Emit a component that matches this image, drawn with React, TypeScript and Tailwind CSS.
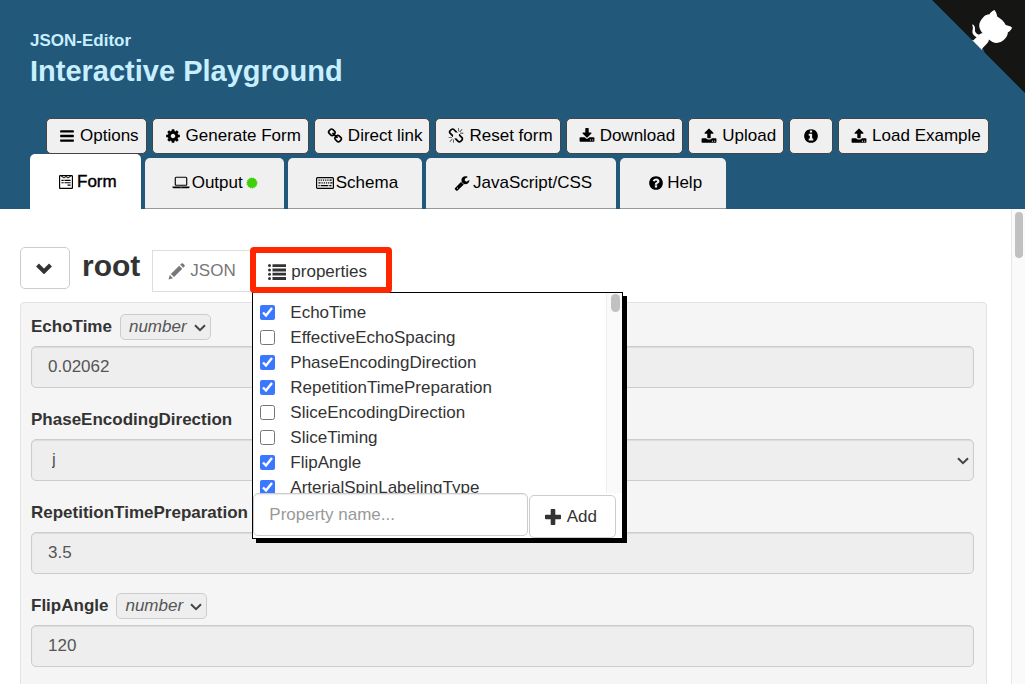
import React, { useState } from 'react';
import { FaWpforms } from 'react-icons/fa';

const ICONS = {
  bars: 'M1664 1344v128q0 26-19 45t-45 19h-1408q-26 0-45-19t-19-45v-128q0-26 19-45t45-19h1408q26 0 45 19t19 45zm0-512v128q0 26-19 45t-45 19h-1408q-26 0-45-19t-19-45v-128q0-26 19-45t45-19h1408q26 0 45 19t19 45zm0-512v128q0 26-19 45t-45 19h-1408q-26 0-45-19t-19-45v-128q0-26 19-45t45-19h1408q26 0 45 19t19 45z',
  cog: 'M1152 896q0-106-75-181t-181-75-181 75-75 181 75 181 181 75 181-75 75-181zm512-109v222q0 12-8 23t-20 13l-185 28q-19 54-39 91 35 50 107 138 10 12 10 25t-9 23q-27 37-99 108t-94 71q-12 0-26-9l-138-108q-44 23-91 38-16 136-29 186-7 28-36 28h-222q-14 0-24.5-8.5t-11.5-21.5l-28-184q-49-16-90-37l-141 107q-10 9-25 9-14 0-25-11-126-114-165-168-7-10-7-23 0-12 8-23 15-21 51-66.5t54-70.5q-27-50-41-99l-183-27q-13-2-21-12.5t-8-23.5v-222q0-12 8-23t19-13l186-28q14-46 39-92-40-57-107-138-10-12-10-24 0-10 9-23 26-36 98.5-107.5t94.5-71.5q13 0 26 10l138 107q44-23 91-38 16-136 29-186 7-28 36-28h222q14 0 24.5 8.5t11.5 21.5l28 184q49 16 90 37l142-107q9-9 24-9 13 0 25 10 129 119 165 170 7 8 7 22 0 12-8 23-15 21-51 66.5t-54 70.5q26 50 41 98l183 28q13 2 21 12.5t8 23.5z',
  link: 'M1520 1216q0-40-28-68l-208-208q-28-28-68-28-42 0-72 32 3 3 19 18.5t21.5 21.5 15 19 13 25.5 3.5 27.5q0 40-28 68t-68 28q-15 0-27.5-3.5t-25.5-13-19-15-21.5-21.5-18.5-19q-33 31-33 73 0 40 28 68l206 207q27 27 68 27 40 0 68-26l147-146q28-28 28-67zm-703-705q0-40-28-68l-206-207q-28-28-68-28-39 0-68 27l-147 146q-28 28-28 67 0 40 28 68l208 208q27 27 68 27 42 0 72-31-3-3-19-18.5t-21.5-21.5-15-19-13-25.5-3.5-27.5q0-40 28-68t68-28q15 0 27.5 3.5t25.5 13 19 15 21.5 21.5 18.5 19q33-31 33-73zm895 705q0 120-85 203l-147 146q-83 83-203 83-121 0-204-85l-206-207q-83-83-83-203 0-123 88-209l-88-88q-86 88-208 88-120 0-204-84l-208-208q-84-84-84-204t85-203l147-146q83-83 203-83 121 0 204 85l206 207q83 83 83 203 0 123-88 209l88 88q86-88 208-88 120 0 204 84l208 208q84 84 84 204z',
  unlink: 'M503 1271l-256 256q-10 9-23 9-12 0-23-9-9-10-9-23t9-23l256-256q10-9 23-9t23 9q9 10 9 23t-9 23zm169 41v320q0 14-9 23t-23 9-23-9-9-23v-320q0-14 9-23t23-9 23 9 9 23zm-224-224q0 14-9 23t-23 9h-320q-14 0-23-9t-9-23 9-23 23-9h320q14 0 23 9t9 23zm1264 128q0 120-85 203l-147 146q-83 83-203 83-121 0-204-85l-334-335q-21-21-42-56l239-18 273 274q28 28 68 28t68-27l147-146q28-28 28-67 0-40-28-68l-274-275 18-239q35 21 56 42l336 336q84 86 84 204zm-617-724l-239 18-273-274q-28-28-68-28-39 0-68 27l-147 146q-28 28-28 67 0 40 28 68l274 274-18 240q-35-21-56-42l-336-336q-84-86-84-204 0-120 85-203l147-146q83-83 203-83 121 0 204 85l334 335q21 21 42 56zm633 84q0 14-9 23t-23 9h-320q-14 0-23-9t-9-23 9-23 23-9h320q14 0 23 9t9 23zm-544-544v320q0 14-9 23t-23 9-23-9-9-23v-320q0-14 9-23t23-9 23 9 9 23zm407 151l-256 256q-11 9-23 9t-23-9q-9-10-9-23t9-23l256-256q10-9 23-9t23 9q9 10 9 23t-9 23z',
  download: 'M1344 1344q0-26-19-45t-45-19-45 19-19 45 19 45 45 19 45-19 19-45zm256 0q0-26-19-45t-45-19-45 19-19 45 19 45 45 19 45-19 19-45zm128-224v320q0 40-28 68t-68 28h-1472q-40 0-68-28t-28-68v-320q0-40 28-68t68-28h465l135 136q58 56 136 56t136-56l136-136h464q40 0 68 28t28 68zm-325-569q17 41-14 70l-448 448q-18 19-45 19t-45-19l-448-448q-31-29-14-70 17-39 59-39h256v-448q0-26 19-45t45-19h256q26 0 45 19t19 45v448h256q42 0 59 39z',
  upload: 'M1344 1472q0-26-19-45t-45-19-45 19-19 45 19 45 45 19 45-19 19-45zm256 0q0-26-19-45t-45-19-45 19-19 45 19 45 45 19 45-19 19-45zm128-224v320q0 40-28 68t-68 28h-1472q-40 0-68-28t-28-68v-320q0-40 28-68t68-28h427q21 56 70.5 92t110.5 36h256q61 0 110.5-36t70.5-92h427q40 0 68 28t28 68zm-325-648q-17 40-59 40h-256v448q0 26-19 45t-45 19h-256q-26 0-45-19t-19-45v-448h-256q-42 0-59-40-17-39 14-69l448-448q18-19 45-19t45 19l448 448q31 30 14 69z',
  info: 'M1152 1376v-160q0-14-9-23t-23-9h-96v-512q0-14-9-23t-23-9h-320q-14 0-23 9t-9 23v160q0 14 9 23t23 9h96v320h-96q-14 0-23 9t-9 23v160q0 14 9 23t23 9h448q14 0 23-9t9-23zm-128-896v-160q0-14-9-23t-23-9h-192q-14 0-23 9t-9 23v160q0 14 9 23t23 9h192q14 0 23-9t9-23zm640 416q0 209-103 385.5t-279.5 279.5-385.5 103-385.5-103-279.5-279.5-103-385.5 103-385.5 279.5-279.5 385.5-103 385.5 103 279.5 279.5 103 385.5z',
  question: 'M1024 1376v-192q0-14-9-23t-23-9h-192q-14 0-23 9t-9 23v192q0 14 9 23t23 9h192q14 0 23-9t9-23zm256-672q0-88-55.5-163t-138.5-116-170-41q-243 0-371 213-15 24 8 42l132 100q7 6 19 6 16 0 25-12 53-68 86-92 34-24 86-24 48 0 85.5 26t37.5 59q0 38-20 61t-68 45q-63 28-115.5 86.5t-52.5 125.5v36q0 14 9 23t23 9h192q14 0 23-9t9-23q0-19 21.5-49.5t54.5-49.5q32-18 49-28.5t46-35 44.5-48 28-60.5 12.5-81zm384 192q0 209-103 385.5t-279.5 279.5-385.5 103-385.5-103-279.5-279.5-103-385.5 103-385.5 279.5-279.5 385.5-103 385.5 103 279.5 279.5 103 385.5z',
  wrench: 'M448 1472q0-26-19-45t-45-19-45 19-19 45 19 45 45 19 45-19 19-45zm644-420l-682 682q-37 37-90 37-52 0-91-37l-106-108q-38-36-38-90 0-53 38-91l681-681q39 98 114.5 173.5t173.5 114.5zm634-435q0 39-23 106-47 134-164.5 217.5t-258.5 83.5q-185 0-316.5-131.5t-131.5-316.5 131.5-316.5 316.5-131.5q58 0 121.5 16.5t107.5 46.5q16 11 16 28t-16 28l-293 169v224l193 107q5-3 79-48.5t135.5-81 70.5-35.5q15 0 23.5 10t8.5 25z',
};

type IconName = keyof typeof ICONS;

function Icon({ name }: { name: IconName }) {
  return (
    <svg viewBox="0 0 1792 1792" className="size-4 shrink-0" fill="currentColor" aria-hidden="true">
      <path d={ICONS[name]} />
    </svg>
  );
}

function LaptopIcon() {
  return (
    <svg viewBox="0 0 1920 1792" className="h-4 w-[18px] shrink-0" fill="currentColor" aria-hidden="true">
      <path d="M416 1216q-66 0-113-47t-47-113v-704q0-66 47-113t113-47h1088q66 0 113 47t47 113v704q0 66-47 113t-113 47h-1088zm-32-864v704q0 13 9.5 22.5t22.5 9.5h1088q13 0 22.5-9.5t9.5-22.5v-704q0-13-9.5-22.5t-22.5-9.5h-1088q-13 0-22.5 9.5t-9.5 22.5zm1376 928h160v96q0 40-47 68t-113 28h-1600q-66 0-113-28t-47-68v-96h1760zm-720 96q16 0 16-16t-16-16h-160q-16 0-16 16t16 16h160z" />
    </svg>
  );
}

function KeyboardIcon() {
  return (
    <svg viewBox="0 0 18 12" className="h-3 w-[18px] shrink-0" fill="none" stroke="currentColor" aria-hidden="true">
      <rect x="0.6" y="0.6" width="16.8" height="10.8" rx="1" strokeWidth="1.2" />
      <path d="M2.5 3.2h1.2m1 0h1.2m1 0h1.2m1 0h1.2m1 0h1.2m1 0h2.2M2.5 5.8h2m1 0h1.2m1 0h1.2m1 0h1.2m1 0h1.2m1 0h2.2M2.5 8.6h1.2m1 0h7.6m1 0h2.2" strokeWidth="1.2" />
    </svg>
  );
}

function ChevronIcon({ className }: { className: string }) {
  return (
    <svg viewBox="0 0 12 8" className={className} fill="none" stroke="currentColor" strokeWidth="2" aria-hidden="true">
      <path d="M1 1.2l5 5 5-5" />
    </svg>
  );
}

function GithubCorner() {
  return (
    <a href="#github" aria-label="View source on GitHub" className="absolute top-0 right-0">
      <svg viewBox="0 0 250 250" className="size-[93px] fill-[#151513] text-white" aria-hidden="true">
        <path d="M0,0 L115,115 L130,115 L142,142 L250,250 L250,0 Z" />
        <g fill="currentColor" transform="translate(-16 -16) scale(1.07)">
          <path
            d="M128.3,109.0 C113.8,99.7 119.0,89.6 119.0,89.6 C122.0,82.7 120.5,78.6 120.5,78.6 C119.2,72.0 123.4,76.3 123.4,76.3 C127.3,80.9 125.5,87.3 125.5,87.3 C122.9,97.6 130.6,101.9 134.4,103.2"
            transform="rotate(-8 130 106)"
          />
          <path d="M115.0,115.0 C114.9,115.1 118.7,116.5 119.8,115.4 L133.7,101.6 C136.9,99.2 139.9,98.4 142.2,98.6 C133.8,88.0 127.5,74.4 143.8,58.0 C148.5,53.4 154.0,51.2 159.7,51.0 C160.3,49.4 163.2,43.6 171.4,40.1 C171.4,40.1 176.1,42.5 178.8,56.2 C183.1,58.6 187.2,61.8 190.9,65.4 C194.5,69.0 197.7,73.2 200.1,77.6 C213.8,80.2 216.3,84.9 216.3,84.9 C212.7,93.1 206.9,96.0 205.4,96.6 C205.1,102.4 203.0,107.8 198.3,112.5 C181.9,128.9 168.3,122.5 157.7,114.1 C157.9,116.9 156.7,120.9 152.7,124.9 L141.0,136.5 C139.8,137.7 141.6,141.9 141.8,141.8 Z" />
        </g>
      </svg>
    </a>
  );
}

const actions: { icon: IconName; label?: string }[] = [
  { icon: 'bars', label: 'Options' },
  { icon: 'cog', label: 'Generate Form' },
  { icon: 'link', label: 'Direct link' },
  { icon: 'unlink', label: 'Reset form' },
  { icon: 'download', label: 'Download' },
  { icon: 'upload', label: 'Upload' },
  { icon: 'info' },
  { icon: 'upload', label: 'Load Example' },
];

function Header() {
  const tab = 'flex h-[51px] items-center rounded-t-[5px] border-b border-[#999] bg-[#f0f0f0]';

  return (
    <header className="relative shrink-0 bg-[#225879]">
      <GithubCorner />
      <h1 className="flex flex-col pt-[30px] pl-[30px] font-bold text-[#c8efff]">
        <span className="text-[17px] leading-[22px]">JSON-Editor</span>
        <span className="text-[29px] leading-[38px]">Interactive Playground</span>
      </h1>

      <div className="mt-7 flex gap-[5px] pl-[46px] whitespace-nowrap">
        {actions.map(({ icon, label }, i) => (
          <button
            key={i}
            type="button"
            aria-label={label ?? 'Info'}
            className={`flex h-9 items-center gap-[5px] rounded-[5px] border border-[#444] bg-[#f0f0f0] ${label ? 'pr-[7px] pl-3' : 'px-[13px]'}`}
          >
            <Icon name={icon} />
            {label}
          </button>
        ))}
      </div>

      <nav className="flex items-end gap-1 pl-[30px]">
        <button type="button" className="flex h-[55px] items-center gap-[3px] rounded-t-[5px] bg-white pr-6 pl-7 [-webkit-text-stroke:0.4px_black]">
          <FaWpforms className="size-4" />
          Form
        </button>
        <button type="button" className={`${tab} gap-[2px] pr-[26px] pl-[27px]`}>
          <LaptopIcon />
          Output
          <svg viewBox="0 0 12 12" className="ml-px size-3" aria-hidden="true">
            <circle cx="6" cy="6" r="5" fill="#3fd00a" stroke="#3fd00a" strokeDasharray="1.2 1" />
          </svg>
        </button>
        <button type="button" className={`${tab} gap-[2px] pr-6 pl-7`}>
          <KeyboardIcon />
          Schema
        </button>
        <button type="button" className={`${tab} gap-[3px] pr-6 pl-7`}>
          <Icon name="wrench" />
          JavaScript/CSS
        </button>
        <button type="button" className={`${tab} gap-[3px] pr-6 pl-7`}>
          <Icon name="question" />
          Help
        </button>
      </nav>
    </header>
  );
}

const properties = [
  { name: 'EchoTime', checked: true },
  { name: 'EffectiveEchoSpacing', checked: false },
  { name: 'PhaseEncodingDirection', checked: true },
  { name: 'RepetitionTimePreparation', checked: true },
  { name: 'SliceEncodingDirection', checked: false },
  { name: 'SliceTiming', checked: false },
  { name: 'FlipAngle', checked: true },
  { name: 'ArterialSpinLabelingType', checked: true },
];

function PropertiesPanel() {
  const [items, setItems] = useState(properties);

  const toggle = (name: string) =>
    setItems(items.map((it) => (it.name === name ? { ...it, checked: !it.checked } : it)));

  return (
    <div className="absolute top-[45px] left-[2px] w-[371px] border border-black bg-white shadow-[4px_4px_0_0_black]">
      <div className="flex h-[200px]">
        <div className="flex-1 overflow-hidden pt-[7px] pl-[7px]">
          {items.map(({ name, checked }) => (
            <label key={name} className="flex h-[25px] items-center gap-[15px]">
              <input type="checkbox" checked={checked} onChange={() => toggle(name)} className="size-[15px] accent-[#3b78ff]" />
              {name}
            </label>
          ))}
        </div>
        <div className="w-4 border-l border-[#eee] bg-[#fafafa] pt-px pl-1">
          <div className="h-[18px] w-[9px] rounded-full bg-[#c1c1c1]" />
        </div>
      </div>
      <div className="flex items-end gap-px">
        <input
          type="text"
          aria-label="Property name"
          placeholder="Property name..."
          className="mb-0.5 h-[43px] w-[275px] rounded-[5px] border border-[#ccc] px-[15px] shadow-[inset_0_1px_1px_rgba(0,0,0,0.08)] placeholder:text-[#999]"
        />
        <button type="button" className="flex h-[43px] w-[87px] items-center justify-center gap-1.5 rounded-[5px] border border-[#ccc] pr-1">
          <svg viewBox="0 0 16 16" className="size-4" fill="currentColor" aria-hidden="true">
            <path d="M6.500 0h3q.8 0 .8.800v4.900h4.900q.8 0 .8.800v3q0 .8-.8.800h-4.900v4.900q0 .8-.8.800h-3q-.8 0-.8-.8v-4.900h-4.900q-.8 0-.8-.8v-3q0-.8.800-.8h4.900v-4.900q0-.8.800-.8z" />
          </svg>
          Add
        </button>
      </div>
    </div>
  );
}

function EditorHeading() {
  return (
    <div className="flex items-start">
      <button type="button" aria-label="Collapse" className="flex h-[42px] w-[50px] items-center justify-center rounded-[5px] border border-[#ccc] pr-[3px]">
        <svg viewBox="0 0 16 11" className="h-[11px] w-4" fill="none" stroke="currentColor" strokeWidth="4" aria-hidden="true">
          <path d="M1.5 2l6.500 6.500L14.500 2" />
        </svg>
      </button>
      <h2 className="ml-3 pt-px text-[30px] leading-9 font-bold">root</h2>
      <div className="ml-3 flex items-start">
        <button type="button" className="mt-[3px] flex h-[42px] w-[98px] items-center gap-1 border border-r-0 border-[#ddd] pl-[15px] text-[#777]">
          <svg viewBox="0 0 18 18" className="size-[18px]" fill="currentColor" aria-hidden="true">
            <path d="M0.500 17.500l1.300-4.500 3.200 3.200zM2.900 12l8.300-8.300 3.100 3.100-8.300 8.300zM12.200 2.700l1.200-1.200q.8-.7 1.600 0l1.500 1.500q.7.800 0 1.600l-1.200 1.200z" />
          </svg>
          JSON
        </button>
        <div className="relative z-10">
          <PropertiesPanel />
          <button type="button" className="relative flex h-[46px] w-[142px] items-center gap-[5px] rounded-[4px] border-[6px] border-[#ff2600] bg-white pt-[3px] pl-3">
            <svg viewBox="0 0 18 16" className="h-4 w-[18px]" fill="currentColor" aria-hidden="true">
              <circle cx="1.500" cy="1.600" r="1.500" />
              <circle cx="1.500" cy="5.900" r="1.500" />
              <circle cx="1.500" cy="10.200" r="1.500" />
              <circle cx="1.500" cy="14.400" r="1.500" />
              <path d="M4.500 0.200h13.500v2.900h-13.500zM4.500 4.500h13.500v2.900h-13.500zM4.500 8.700h13.500v2.900h-13.500zM4.500 13h13.500v2.900h-13.500z" />
            </svg>
            properties
          </button>
        </div>
      </div>
    </div>
  );
}

const control =
  'h-[42px] w-full rounded-[5px] border border-[#ccc] bg-[#eee] px-4 text-[#555] shadow-[inset_0_1px_1px_rgba(0,0,0,0.08)]';

interface FieldProps {
  name: string;
  value: string;
  typed?: boolean;
  options?: boolean;
}

function Field({ name, value, typed, options }: FieldProps) {
  return (
    <div className="mb-[19px]">
      <div className="mb-[6px] flex h-[26px] items-center gap-2">
        <label htmlFor={name} className="font-bold">{name}</label>
        {typed && (
          <div className="relative">
            <select aria-label={`${name} type`} className="h-[26px] w-[91px] appearance-none rounded-[5px] border border-[#ccc] bg-[#eee] pl-2 text-[#555] italic">
              <option>number</option>
            </select>
            <ChevronIcon className="pointer-events-none absolute top-[10px] right-[5px] h-2 w-3 text-[#444]" />
          </div>
        )}
      </div>
      {options ? (
        <div className="relative">
          <select id={name} defaultValue={value} className={`${control} appearance-none pl-5`}>
            <option>{value}</option>
          </select>
          <ChevronIcon className="pointer-events-none absolute top-[18px] right-[5px] h-2 w-3 text-[#444]" />
        </div>
      ) : (
        <input id={name} type="text" defaultValue={value} className={control} />
      )}
    </div>
  );
}

export default function App() {
  return (
    <div className="flex h-screen flex-col overflow-hidden bg-white font-['Liberation_Sans',Arial,sans-serif] text-[17px] leading-6 text-black">
      <Header />
      <main className="flex min-h-0 flex-1 text-[#333]">
        <div className="flex-1 overflow-hidden pt-[38px] pr-6 pl-5">
          <EditorHeading />
          <div className="mt-[9px] rounded-[4px] border border-[#e3e3e3] bg-[#f5f5f5] pt-[11px] pr-3 pb-4 pl-[10px]">
            <Field name="EchoTime" value="0.02062" typed />
            <Field name="PhaseEncodingDirection" value="j" options />
            <Field name="RepetitionTimePreparation" value="3.5" />
            <Field name="FlipAngle" value="120" typed />
          </div>
        </div>
        {/* scroll track */}
        <div className="w-[14px] border-l border-[#e8e8e8] bg-[#fafafa] pt-[3px] pl-[3px]">
          <div className="h-[46px] w-2 rounded-full bg-[#c1c1c1]" />
        </div>
      </main>
    </div>
  );
}
